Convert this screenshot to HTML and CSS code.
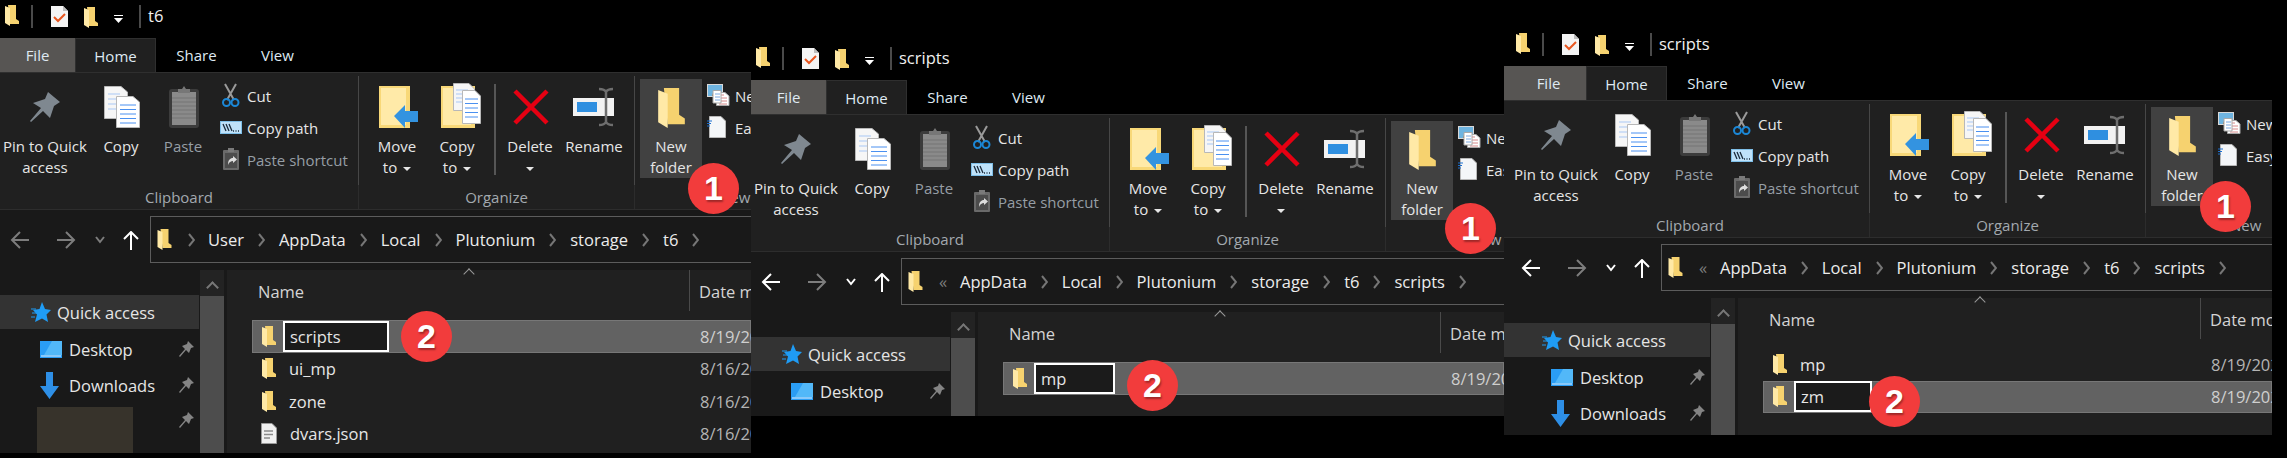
FILE: index.html
```html
<!DOCTYPE html>
<html lang="en">
<head>
    <meta charset="UTF-8">
    <title>Creating the scripts folders</title>
    <link rel="stylesheet" href="styles.css">
</head>
<body>
    <!-- shared icons -->
    <svg class="defs" width="0" height="0">
        <symbol id="i-folder" viewBox="0 0 14 21">
            <path d="M3 0H11V14L14 16V19H5Z" fill="#f6d26f"/>
            <path d="M0 1L5 3V21L0 18Z" fill="#ffe9a6"/>
        </symbol>
        <symbol id="i-check" viewBox="0 0 17 21">
            <path d="M0 0H12L17 5V21H0Z" fill="#f4f4f4"/>
            <path d="M12 0V5H17Z" fill="#bdbdbd"/>
            <path d="M3 11L7 15L14 8" fill="none" stroke="#e8561f" stroke-width="2"/>
        </symbol>
        <symbol id="i-qat" viewBox="0 0 9 8">
            <path d="M0 0.5H9" stroke="#fff" stroke-width="1"/>
            <path d="M0 3H9L4.5 8Z" fill="#fff"/>
        </symbol>
        <symbol id="i-crumb" viewBox="0 0 7 14">
            <path d="M1 1L6 7L1 13" fill="none" stroke="#767676" stroke-width="2"/>
        </symbol>
        <symbol id="i-arrow" viewBox="0 0 20 20">
            <path d="M19 10H2M10 2L2 10L10 18" fill="none" stroke="currentColor" stroke-width="2"/>
        </symbol>
        <symbol id="i-chev" viewBox="0 0 10 8">
            <path d="M1 1L5 6L9 1" fill="none" stroke="currentColor" stroke-width="2"/>
        </symbol>
        <symbol id="i-up" viewBox="0 0 16 19">
            <path d="M8 19V2M1 8L8 1L15 8" fill="none" stroke="#fff" stroke-width="2"/>
        </symbol>
        <symbol id="i-star" viewBox="0 0 20 20">
            <path d="M11 0L14 7L20 8L15.500 12.500L17 20L11 16.500L4 20L6 12.500L2 8L8.500 7Z" fill="#1f9cf5"/>
            <path d="M0 7H5M1 11H6M0 15H4" stroke="#1f9cf5"/>
        </symbol>
        <symbol id="i-desktop" viewBox="0 0 22 17">
            <rect width="22" height="17" fill="#2a9df4"/>
            <path d="M12 0H22V14L4 14Z" fill="#52b8f8"/>
            <path d="M1 15H21" stroke="#e8f4ff"/>
        </symbol>
        <symbol id="i-down" viewBox="0 0 19 27">
            <path d="M6 0H13V14H19L9.500 27L0 14H6Z" fill="#2e8fe6"/>
        </symbol>
        <symbol id="i-pin" viewBox="0 0 15 16">
            <path d="M9 0L15 6L12 7L10 12L7 9L1 16L0 15L6 8L3 5L8 3Z" fill="#848484"/>
        </symbol>
        <symbol id="i-file" viewBox="0 0 16 21">
            <path d="M0.500 0.500H11L15.500 5V20.500H0.500Z" fill="#f0f0f0" stroke="#9a9a9a"/>
            <path d="M3 8H12M3 11.500H12M3 15H9" stroke="#8a8a8a" stroke-width="1.500"/>
        </symbol>
        <!-- ribbon icons, drawn in window coordinates -->
        <symbol id="i-big-pin" viewBox="0 80 90 48">
            <path d="M48 92L60 102L54 106L50 118L43 111L31 122L30 121L41 108L33 103L45 99Z" fill="#7f8890"/>
        </symbol>
        <symbol id="i-big-copy" viewBox="90 80 62 48">
            <path d="M104.500 86.500H121L127.500 92V118.500H104.500Z" fill="#f6f6f6" stroke="#b8b8b8"/>
            <path d="M108 94H120M108 99H123M108 104H123M108 109H123" stroke="#a9c8f5"/>
            <path d="M116.500 96.500H133L139.500 102V127.500H116.500Z" fill="#fff" stroke="#b8b8b8"/>
            <path d="M120 105H136M120 109.500H136M120 114H136M120 118.500H136M120 123H136" stroke="#4a90f0"/>
        </symbol>
        <symbol id="i-big-paste" viewBox="152 80 62 48">
            <rect x="169" y="89" width="30" height="39" rx="3" fill="#3c3c3c"/>
            <rect x="172" y="92" width="24" height="33" fill="#8a8a8a"/>
            <path d="M172 98H196M172 102H196M172 106H196M172 110H196M172 114H196M172 118H196" stroke="#747474"/>
            <path d="M178 93V89H182L184 86L186 89H190V93Z" fill="#777"/>
        </symbol>
        <symbol id="i-cut" viewBox="220 80 27 32">
            <path d="M225 84L234 100M236 84L227 100" stroke="#9a9a9a" stroke-width="2"/>
            <circle cx="226.500" cy="102.500" r="3.500" fill="none" stroke="#1b87d6" stroke-width="2"/>
            <circle cx="235" cy="102.500" r="3.500" fill="none" stroke="#1b87d6" stroke-width="2"/>
        </symbol>
        <symbol id="i-path" viewBox="220 112 27 32">
            <rect x="220.500" y="121.500" width="21" height="12" fill="#bfe2fa" stroke="#7fbfe8"/>
            <path d="M223 124L226 131M226 124L229 131M229 124L232 131" stroke="#1c2c3c" stroke-width="1.300"/>
            <path d="M233 131H240" stroke="#1c2c3c" stroke-dasharray="1 1.500" stroke-width="1.300"/>
        </symbol>
        <symbol id="i-shortcut" viewBox="220 144 27 32">
            <rect x="223" y="150" width="16" height="20" rx="1" fill="#6a6a6a"/>
            <rect x="225" y="153" width="12" height="15" fill="#4c4c4c"/>
            <path d="M228 148H234V152H228Z" fill="#7a7a7a"/>
            <path d="M228 165C228 160 230 158 233 158V156L237 159.500L233 163V161C231 161 229 162 228 165Z" fill="#ddd"/>
        </symbol>
        <symbol id="i-move" viewBox="367 80 60 48">
            <rect x="379" y="86" width="31" height="42" fill="#f8d878"/>
            <rect x="381" y="88" width="25" height="37" fill="#ffeaa8"/>
            <path d="M394 116L405 105V111H418V122H405V128Z" fill="#3393e0"/>
        </symbol>
        <symbol id="i-copyto" viewBox="427 80 60 48">
            <rect x="441" y="86" width="34" height="42" fill="#f8d878"/>
            <rect x="443" y="88" width="28" height="37" fill="#ffeaa8"/>
            <path d="M453.500 83.500H469L474.500 89V110.500H453.500Z" fill="#f6f6f6" stroke="#b8b8b8"/>
            <path d="M456 90H468M456 94H472M456 98H472M456 102H472" stroke="#a9c8f5"/>
            <path d="M462.500 90.500H475L480.500 96V123.500H462.500Z" fill="#fff" stroke="#b8b8b8"/>
            <path d="M465 99H478M465 103.500H478M465 108H478M465 112.500H478M465 117H478" stroke="#4a90f0"/>
        </symbol>
        <symbol id="i-delete" viewBox="495 80 68 48">
            <path d="M514 91L546 123M546 91L514 123" stroke="#e60012" stroke-width="4.500"/>
        </symbol>
        <symbol id="i-rename" viewBox="563 80 60 48">
            <rect x="572" y="98" width="41" height="18" fill="#f2f2f2"/>
            <rect x="576" y="102" width="20" height="10" fill="#2f8fe0"/>
            <path d="M598 89C601 89 604 90 605 92V122C604 124 601 125 598 125M612 89C609 89 606 90 605 92M605 122C606 124 609 125 612 125" fill="none" stroke="#6e6e6e" stroke-width="2.500"/>
        </symbol>
        <symbol id="i-newitem" viewBox="707 80 28 32">
            <rect x="707.500" y="84.500" width="15" height="12" fill="#6eb4e0" stroke="#d8d8d8"/>
            <path d="M712 96L714 90H717L719 96Z" fill="#a07040"/>
            <path d="M716.500 92.500H725L729 96V105.500H716.500Z" fill="#fff" stroke="#a8a8a8"/>
            <path d="M719 95H724M719 98H727M719 101H727M719 104H727" stroke="#d88a8a"/>
            <path d="M713 90.500H721V103H713Z" fill="#fff" stroke="#a8a8a8"/>
            <path d="M715 94H720M715 97H720M715 100H720" stroke="#7aa8e0"/>
        </symbol>
        <symbol id="i-easy" viewBox="707 112 28 32">
            <path d="M709.500 116.500H721L725.500 121V137.500H709.500Z" fill="#f4f6f8" stroke="#b8b8b8"/>
            <path d="M706 121H712M706 123.500H711M706 126H710" stroke="#1b6fd0"/>
        </symbol>
    </svg>

    <!-- first window: t6 -->
    <section class="win win-a">
        <header class="titlebar">
            <svg class="qat-folder"><use href="#i-folder"/></svg>
            <span class="qat-sep"></span>
            <svg class="qat-check"><use href="#i-check"/></svg>
            <svg class="qat-folder2"><use href="#i-folder"/></svg>
            <svg class="qat-drop"><use href="#i-qat"/></svg>
            <span class="qat-sep qat-sep-last"></span>
            <span class="title">t6</span>
        </header>
        <nav class="tabs">
            <span class="tab tab-file">File</span>
            <span class="tab tab-home">Home</span>
            <span class="tab tab-share">Share</span>
            <span class="tab tab-view">View</span>
        </nav>
        <div class="ribbon">
            <div class="group group-clipboard">
                <div class="group-items">
                    <div class="big big-pin"><svg><use href="#i-big-pin"/></svg><span>Pin to Quick</span><span>access</span></div>
                    <div class="big big-copy"><svg><use href="#i-big-copy"/></svg><span>Copy</span></div>
                    <div class="big big-paste dim"><svg><use href="#i-big-paste"/></svg><span>Paste</span></div>
                    <div class="smalls smalls-clip">
                        <div class="small"><svg><use href="#i-cut"/></svg><span>Cut</span></div>
                        <div class="small"><svg><use href="#i-path"/></svg><span>Copy path</span></div>
                        <div class="small dim"><svg><use href="#i-shortcut"/></svg><span>Paste shortcut</span></div>
                    </div>
                </div>
                <div class="group-label">Clipboard</div>
            </div>
            <div class="group group-organize">
                <div class="group-items">
                    <div class="big big-move"><svg><use href="#i-move"/></svg><span>Move</span><span>to<i class="caret"></i></span></div>
                    <div class="big big-copyto"><svg><use href="#i-copyto"/></svg><span>Copy</span><span>to<i class="caret"></i></span></div>
                    <span class="org-sep"></span>
                    <div class="big big-delete"><svg><use href="#i-delete"/></svg><span>Delete</span><span><i class="caret caret-solo"></i></span></div>
                    <div class="big big-rename"><svg><use href="#i-rename"/></svg><span>Rename</span></div>
                </div>
                <div class="group-label">Organize</div>
            </div>
            <div class="group group-new">
                <div class="group-items">
                    <div class="big big-newfolder"><svg><use href="#i-folder"/></svg><span>New</span><span>folder</span></div>
                    <div class="smalls smalls-new">
                        <div class="small"><svg><use href="#i-newitem"/></svg><span>New item</span></div>
                        <div class="small"><svg><use href="#i-easy"/></svg><span>Easy access</span></div>
                    </div>
                </div>
                <div class="group-label group-label-new">New</div>
            </div>
        </div>
        <div class="addr">
            <svg class="nav-back off"><use href="#i-arrow"/></svg>
            <svg class="nav-fwd off"><use href="#i-arrow"/></svg>
            <svg class="nav-chev off"><use href="#i-chev"/></svg>
            <svg class="nav-up"><use href="#i-up"/></svg>
            <div class="addr-box">
                <svg class="addr-folder"><use href="#i-folder"/></svg>
                <svg class="crumb-sep"><use href="#i-crumb"/></svg><span>User</span>
                <svg class="crumb-sep"><use href="#i-crumb"/></svg><span>AppData</span>
                <svg class="crumb-sep"><use href="#i-crumb"/></svg><span>Local</span>
                <svg class="crumb-sep"><use href="#i-crumb"/></svg><span>Plutonium</span>
                <svg class="crumb-sep"><use href="#i-crumb"/></svg><span>storage</span>
                <svg class="crumb-sep"><use href="#i-crumb"/></svg><span>t6</span>
                <svg class="crumb-sep"><use href="#i-crumb"/></svg>
            </div>
        </div>
        <div class="panes">
            <aside class="tree">
                <div class="tree-rows">
                    <div class="tree-row tree-quick"><svg class="ic-star"><use href="#i-star"/></svg>Quick access</div>
                    <div class="tree-row"><svg class="ic-desktop"><use href="#i-desktop"/></svg>Desktop<svg class="ic-pin"><use href="#i-pin"/></svg></div>
                    <div class="tree-row"><svg class="ic-down"><use href="#i-down"/></svg>Downloads<svg class="ic-pin"><use href="#i-pin"/></svg></div>
                    <div class="tree-row tree-thumb"><span class="thumb"></span><svg class="ic-pin"><use href="#i-pin"/></svg></div>
                </div>
                <div class="tree-scroll"><span class="scroll-up"></span><span class="scroll-thumb"></span></div>
            </aside>
            <main class="list">
                <div class="list-head"><span class="col-name">Name<i class="sort"></i></span><span class="col-date">Date modified</span></div>
                <div class="row row-on"><svg class="ic-item"><use href="#i-folder"/></svg><span class="name name-edit edit-scripts">scripts</span><span class="date">8/19/2020</span></div>
                <div class="row"><svg class="ic-item"><use href="#i-folder"/></svg><span class="name">ui_mp</span><span class="date">8/16/2020</span></div>
                <div class="row"><svg class="ic-item"><use href="#i-folder"/></svg><span class="name">zone</span><span class="date">8/16/2020</span></div>
                <div class="row"><svg class="ic-item ic-json"><use href="#i-file"/></svg><span class="name">dvars.json</span><span class="date">8/16/2020</span></div>
            </main>
        </div>
        <span class="badge badge-one">1</span>
        <span class="badge badge-two">2</span>
    </section>

    <!-- second window: t6\scripts -->
    <section class="win win-b">
        <header class="titlebar">
            <svg class="qat-folder"><use href="#i-folder"/></svg>
            <span class="qat-sep"></span>
            <svg class="qat-check"><use href="#i-check"/></svg>
            <svg class="qat-folder2"><use href="#i-folder"/></svg>
            <svg class="qat-drop"><use href="#i-qat"/></svg>
            <span class="qat-sep qat-sep-last"></span>
            <span class="title">scripts</span>
        </header>
        <nav class="tabs">
            <span class="tab tab-file">File</span>
            <span class="tab tab-home">Home</span>
            <span class="tab tab-share">Share</span>
            <span class="tab tab-view">View</span>
        </nav>
        <div class="ribbon">
            <div class="group group-clipboard">
                <div class="group-items">
                    <div class="big big-pin"><svg><use href="#i-big-pin"/></svg><span>Pin to Quick</span><span>access</span></div>
                    <div class="big big-copy"><svg><use href="#i-big-copy"/></svg><span>Copy</span></div>
                    <div class="big big-paste dim"><svg><use href="#i-big-paste"/></svg><span>Paste</span></div>
                    <div class="smalls smalls-clip">
                        <div class="small"><svg><use href="#i-cut"/></svg><span>Cut</span></div>
                        <div class="small"><svg><use href="#i-path"/></svg><span>Copy path</span></div>
                        <div class="small dim"><svg><use href="#i-shortcut"/></svg><span>Paste shortcut</span></div>
                    </div>
                </div>
                <div class="group-label">Clipboard</div>
            </div>
            <div class="group group-organize">
                <div class="group-items">
                    <div class="big big-move"><svg><use href="#i-move"/></svg><span>Move</span><span>to<i class="caret"></i></span></div>
                    <div class="big big-copyto"><svg><use href="#i-copyto"/></svg><span>Copy</span><span>to<i class="caret"></i></span></div>
                    <span class="org-sep"></span>
                    <div class="big big-delete"><svg><use href="#i-delete"/></svg><span>Delete</span><span><i class="caret caret-solo"></i></span></div>
                    <div class="big big-rename"><svg><use href="#i-rename"/></svg><span>Rename</span></div>
                </div>
                <div class="group-label">Organize</div>
            </div>
            <div class="group group-new">
                <div class="group-items">
                    <div class="big big-newfolder"><svg><use href="#i-folder"/></svg><span>New</span><span>folder</span></div>
                    <div class="smalls smalls-new">
                        <div class="small"><svg><use href="#i-newitem"/></svg><span>New item</span></div>
                        <div class="small"><svg><use href="#i-easy"/></svg><span>Easy access</span></div>
                    </div>
                </div>
                <div class="group-label group-label-new">New</div>
            </div>
        </div>
        <div class="addr">
            <svg class="nav-back"><use href="#i-arrow"/></svg>
            <svg class="nav-fwd off"><use href="#i-arrow"/></svg>
            <svg class="nav-chev"><use href="#i-chev"/></svg>
            <svg class="nav-up"><use href="#i-up"/></svg>
            <div class="addr-box addr-box-deep">
                <svg class="addr-folder"><use href="#i-folder"/></svg>
                <span class="crumb-more">«</span><span>AppData</span>
                <svg class="crumb-sep"><use href="#i-crumb"/></svg><span>Local</span>
                <svg class="crumb-sep"><use href="#i-crumb"/></svg><span>Plutonium</span>
                <svg class="crumb-sep"><use href="#i-crumb"/></svg><span>storage</span>
                <svg class="crumb-sep"><use href="#i-crumb"/></svg><span>t6</span>
                <svg class="crumb-sep"><use href="#i-crumb"/></svg><span>scripts</span>
                <svg class="crumb-sep"><use href="#i-crumb"/></svg>
            </div>
        </div>
        <div class="panes">
            <aside class="tree">
                <div class="tree-rows">
                    <div class="tree-row tree-quick"><svg class="ic-star"><use href="#i-star"/></svg>Quick access</div>
                    <div class="tree-row"><svg class="ic-desktop"><use href="#i-desktop"/></svg>Desktop<svg class="ic-pin"><use href="#i-pin"/></svg></div>
                </div>
                <div class="tree-scroll"><span class="scroll-up"></span><span class="scroll-thumb"></span></div>
            </aside>
            <main class="list">
                <div class="list-head"><span class="col-name">Name<i class="sort"></i></span><span class="col-date">Date modified</span></div>
                <div class="row row-on"><svg class="ic-item"><use href="#i-folder"/></svg><span class="name name-edit edit-mp">mp</span><span class="date">8/19/2020</span></div>
            </main>
        </div>
        <span class="badge badge-one">1</span>
        <span class="badge badge-two">2</span>
    </section>

    <!-- third window: t6\scripts with mp already there -->
    <section class="win win-c">
        <header class="titlebar">
            <svg class="qat-folder"><use href="#i-folder"/></svg>
            <span class="qat-sep"></span>
            <svg class="qat-check"><use href="#i-check"/></svg>
            <svg class="qat-folder2"><use href="#i-folder"/></svg>
            <svg class="qat-drop"><use href="#i-qat"/></svg>
            <span class="qat-sep qat-sep-last"></span>
            <span class="title">scripts</span>
        </header>
        <nav class="tabs">
            <span class="tab tab-file">File</span>
            <span class="tab tab-home">Home</span>
            <span class="tab tab-share">Share</span>
            <span class="tab tab-view">View</span>
        </nav>
        <div class="ribbon">
            <div class="group group-clipboard">
                <div class="group-items">
                    <div class="big big-pin"><svg><use href="#i-big-pin"/></svg><span>Pin to Quick</span><span>access</span></div>
                    <div class="big big-copy"><svg><use href="#i-big-copy"/></svg><span>Copy</span></div>
                    <div class="big big-paste dim"><svg><use href="#i-big-paste"/></svg><span>Paste</span></div>
                    <div class="smalls smalls-clip">
                        <div class="small"><svg><use href="#i-cut"/></svg><span>Cut</span></div>
                        <div class="small"><svg><use href="#i-path"/></svg><span>Copy path</span></div>
                        <div class="small dim"><svg><use href="#i-shortcut"/></svg><span>Paste shortcut</span></div>
                    </div>
                </div>
                <div class="group-label">Clipboard</div>
            </div>
            <div class="group group-organize">
                <div class="group-items">
                    <div class="big big-move"><svg><use href="#i-move"/></svg><span>Move</span><span>to<i class="caret"></i></span></div>
                    <div class="big big-copyto"><svg><use href="#i-copyto"/></svg><span>Copy</span><span>to<i class="caret"></i></span></div>
                    <span class="org-sep"></span>
                    <div class="big big-delete"><svg><use href="#i-delete"/></svg><span>Delete</span><span><i class="caret caret-solo"></i></span></div>
                    <div class="big big-rename"><svg><use href="#i-rename"/></svg><span>Rename</span></div>
                </div>
                <div class="group-label">Organize</div>
            </div>
            <div class="group group-new">
                <div class="group-items">
                    <div class="big big-newfolder"><svg><use href="#i-folder"/></svg><span>New</span><span>folder</span></div>
                    <div class="smalls smalls-new">
                        <div class="small"><svg><use href="#i-newitem"/></svg><span>New item</span></div>
                        <div class="small"><svg><use href="#i-easy"/></svg><span>Easy access</span></div>
                    </div>
                </div>
                <div class="group-label group-label-new">New</div>
            </div>
        </div>
        <div class="addr">
            <svg class="nav-back"><use href="#i-arrow"/></svg>
            <svg class="nav-fwd off"><use href="#i-arrow"/></svg>
            <svg class="nav-chev"><use href="#i-chev"/></svg>
            <svg class="nav-up"><use href="#i-up"/></svg>
            <div class="addr-box addr-box-deep">
                <svg class="addr-folder"><use href="#i-folder"/></svg>
                <span class="crumb-more">«</span><span>AppData</span>
                <svg class="crumb-sep"><use href="#i-crumb"/></svg><span>Local</span>
                <svg class="crumb-sep"><use href="#i-crumb"/></svg><span>Plutonium</span>
                <svg class="crumb-sep"><use href="#i-crumb"/></svg><span>storage</span>
                <svg class="crumb-sep"><use href="#i-crumb"/></svg><span>t6</span>
                <svg class="crumb-sep"><use href="#i-crumb"/></svg><span>scripts</span>
                <svg class="crumb-sep"><use href="#i-crumb"/></svg>
            </div>
        </div>
        <div class="panes">
            <aside class="tree">
                <div class="tree-rows">
                    <div class="tree-row tree-quick"><svg class="ic-star"><use href="#i-star"/></svg>Quick access</div>
                    <div class="tree-row"><svg class="ic-desktop"><use href="#i-desktop"/></svg>Desktop<svg class="ic-pin"><use href="#i-pin"/></svg></div>
                    <div class="tree-row"><svg class="ic-down"><use href="#i-down"/></svg>Downloads<svg class="ic-pin"><use href="#i-pin"/></svg></div>
                </div>
                <div class="tree-scroll"><span class="scroll-up"></span><span class="scroll-thumb"></span></div>
            </aside>
            <main class="list">
                <div class="list-head"><span class="col-name">Name<i class="sort"></i></span><span class="col-date">Date modified</span></div>
                <div class="row"><svg class="ic-item"><use href="#i-folder"/></svg><span class="name">mp</span><span class="date">8/19/2020</span></div>
                <div class="row row-on"><svg class="ic-item"><use href="#i-folder"/></svg><span class="name name-edit edit-zm">zm</span><span class="date">8/19/2020</span></div>
            </main>
        </div>
        <span class="badge badge-one">1</span>
        <span class="badge badge-two">2</span>
    </section>
</body>
</html>
```

FILE: styles.css
```css
* {
    box-sizing: border-box;
}
html, body {
    margin: 0;
    height: 100%;
    background-color: #000;
    overflow: hidden;
}
body {
    position: relative;
    font-family: "Open Sans", "Noto Sans", sans-serif;
    font-size: 15px;
    color: #e6e6e6;
}
svg {
    display: block;
    flex: none;
}
.defs {
    position: absolute;
}

/* the three screenshots sit on a black canvas */
.win {
    --inset: 0px;
    position: absolute;
    display: flex;
    flex-direction: column;
    overflow: hidden;
    background-color: #000;
}
.win-a { left: 0; top: 0; width: 751px; height: 453px; }
.win-b { left: 751px; top: 42px; width: 753px; height: 374px; }
.win-c { left: 1504px; top: 28px; width: 768px; height: 407px; --inset: 7px; }

/* title bar */
.titlebar {
    display: flex;
    align-items: flex-start;
    height: 38px;
    flex: none;
    padding-left: calc(var(--inset) + 5px);
    background-color: #000;
}
.qat-folder { width: 14px; height: 21px; margin-top: 5px; }
.qat-sep { width: 2px; height: 23px; margin: 5px 0 0 12px; background-color: #4a4a4a; }
.qat-check { width: 17px; height: 21px; margin: 6px 0 0 18px; }
.qat-folder2 { width: 14px; height: 21px; margin: 7px 0 0 16px; }
.qat-drop { width: 9px; height: 8px; margin: 15px 0 0 16px; }
.qat-sep-last { margin-left: 16px; }
.title { margin-left: 7px; font-size: 16.500px; line-height: 32px; color: #f0f0f0; }

/* tabs */
.tabs {
    display: flex;
    height: 34px;
    flex: none;
    line-height: 34px;
    color: #dfe9f2;
}
.tab { text-align: center; }
.tab-file { width: calc(var(--inset) + 75px); padding-left: var(--inset); background-color: #575553; }
.tab-home { width: 81px; background-color: #202020; border: 1px solid #2f2f2f; border-bottom: none; }
.tab-share { width: 81px; }
.tab-view { width: 81px; }

/* ribbon */
.ribbon {
    display: flex;
    height: 138px;
    flex: none;
    padding-left: var(--inset);
    background-color: #202020;
    border-top: 1px solid #2f2f2f;
    border-bottom: 1px solid #2d2d2d;
}
.group {
    display: flex;
    flex-direction: column;
    flex: none;
}
.group-clipboard { width: 359px; }
.group-organize { width: 276px; }
.group-new { flex: 1; overflow: hidden; }
.group-items {
    display: flex;
    height: 111px;
    margin-top: 3px;
    border-right: 1px solid #474747;
}
.group-new .group-items { border-right: none; }
.group-label {
    flex: 1;
    text-align: center;
    line-height: 24px;
    color: #a3a9af;
    border-right: 1px solid #2c2c2c;
}
.group-label-new { padding: 0 0 0 68px; text-align: left; margin-left: 16px; border-right: none; }

.big {
    display: flex;
    flex-direction: column;
    align-items: center;
    flex: none;
    line-height: 21px;
    white-space: nowrap;
    padding-top: 4px;
}
.big svg { height: 48px; margin-bottom: 8px; }
.big-pin { width: 90px; }
.big-pin svg { width: 90px; }
.big-copy { width: 62px; }
.big-copy svg { width: 62px; }
.big-paste { width: 62px; }
.big-paste svg { width: 62px; }
.big-move { width: 60px; margin-left: 8px; }
.big-move svg { width: 60px; }
.big-copyto { width: 60px; }
.big-copyto svg { width: 60px; }
.big-delete { width: 68px; }
.big-delete svg { width: 68px; }
.big-rename { width: 60px; }
.big-rename svg { width: 60px; }
.big-newfolder {
    width: 62px;
    height: 99px;
    margin: 3px 0 0 5px;
    padding-top: 0;
    background-color: #414141;
}
.big-newfolder svg { width: 27px; height: 40px; margin: 9px 0 8px; }
.org-sep {
    width: 2px;
    height: 91px;
    margin: 8px 0 0 7px;
    background-color: #565656;
}
.dim { color: #969ea5; }

.smalls {
    display: flex;
    flex-direction: column;
    padding-top: 4px;
    flex: none;
}
.smalls-clip { margin-left: 6px; }
.smalls-new { margin-left: 5px; }
.small {
    display: flex;
    align-items: center;
    height: 32px;
    white-space: nowrap;
}
.small svg { width: 27px; height: 32px; }
.smalls-new .small svg { width: 28px; }

.caret {
    display: inline-block;
    width: 0;
    height: 0;
    margin-left: 6px;
    vertical-align: middle;
    border-left: 4px solid transparent;
    border-right: 4px solid transparent;
    border-top: 4px solid #e6e6e6;
}
.caret-solo { margin-left: 0; }

/* address row */
.addr {
    display: flex;
    align-items: center;
    height: 60px;
    flex: none;
    padding-left: calc(var(--inset) + 10px);
    background-color: #191919;
}
.nav-back { width: 20px; height: 20px; color: #fff; }
.nav-fwd { width: 20px; height: 20px; margin-left: 26px; color: #7d7d7d; transform: scaleX(-1); }
.nav-chev { width: 10px; height: 8px; margin-left: 19px; color: #fff; }
.nav-chev.off { color: #7d7d7d; }
.nav-back.off { color: #7d7d7d; }
.nav-up { width: 16px; height: 19px; margin-left: 18px; }
.addr-box {
    display: flex;
    align-items: center;
    align-self: flex-start;
    flex: 1;
    height: 47px;
    margin: 6px -2px 0 11px;
    padding-left: 6px;
    border: 1px solid #5c5c5c;
    font-size: 16.500px;
    white-space: nowrap;
    color: #ececec;
}
.addr-folder { width: 15px; height: 21px; margin-right: 16px; }
.crumb-sep { width: 7px; height: 14px; margin: 0 14px; }
.addr-folder + .crumb-sep { margin-left: 0; margin-right: 13px; }
.crumb-more { width: 21px; color: #7d7d7d; }

/* panes */
.panes {
    display: flex;
    flex: 1;
    min-height: 0;
    font-size: 16.500px;
    background-color: #191919;
}
.tree {
    display: flex;
    flex: none;
    width: calc(var(--inset) + 224px);
    padding-top: 25px;
}
.tree-rows {
    flex: none;
    width: calc(var(--inset) + 199px);
    margin-right: 1px;
}
.tree-row {
    display: flex;
    align-items: center;
    height: 36px;
    padding-left: calc(var(--inset) + 40px);
    white-space: nowrap;
}
.tree-quick {
    height: 34px;
    margin-bottom: 2px;
    padding-left: calc(var(--inset) + 31px);
    background-color: #333;
}
.ic-star { width: 20px; height: 20px; margin-right: 6px; }
.ic-desktop { width: 22px; height: 17px; margin-right: 7px; }
.ic-down { width: 19px; height: 27px; margin-right: 10px; }
.ic-pin { width: 15px; height: 16px; margin-left: auto; margin-right: 5px; }
.tree-thumb { height: 46px; margin-top: 4px; align-items: flex-start; padding-left: calc(var(--inset) + 37px); }
.tree-thumb .ic-pin { margin-top: 5px; }
.thumb { width: 96px; height: 46px; background-color: #37332b; }
.tree-scroll {
    display: flex;
    flex-direction: column;
    align-items: stretch;
    width: 24px;
    margin-top: -25px;
    background-color: #232323;
}
.scroll-up {
    display: block;
    width: 9px;
    height: 9px;
    margin: 13px auto 0;
    border-left: 2px solid #777;
    border-top: 2px solid #777;
    transform: rotate(45deg);
}
.scroll-thumb { flex: 1; margin-top: 4px; background-color: #4d4d4d; }

.list {
    flex: 1;
    min-width: 0;
    margin-left: 3px;
    background-color: #202020;
}
.list-head {
    display: flex;
    height: 50px;
    color: #d4d4d4;
}
.col-name {
    position: relative;
    flex: none;
    width: 463px;
    height: 41px;
    padding: 10px 0 0 31px;
    border-right: 1px solid #4a4a4a;
}
.sort {
    position: absolute;
    left: 238px;
    top: 0;
    width: 8px;
    height: 8px;
    border-left: 1px solid #999;
    border-top: 1px solid #999;
    transform: rotate(45deg);
}
.col-date {
    flex: none;
    padding: 10px 0 0 9px;
    white-space: nowrap;
}
.row {
    display: flex;
    align-items: center;
    height: 32.500px;
    margin-left: 25px;
    white-space: nowrap;
}
.row-on {
    background-color: #626262;
    border: 1px solid #777;
}
.ic-item { width: 14px; height: 21px; margin-left: 10px; }
.ic-json { width: 16px; height: 21px; margin-left: 9px; }
.name {
    flex: none;
    width: 424px;
    padding-left: 13px;
    color: #e6e6e6;
}
.ic-json + .name { width: 423px; }
.row-on .ic-item { margin-left: 9px; }
.row-on .date { color: #cfcfcf; }
.date { flex: none; color: #b4b4b4; }
.name-edit {
    height: 31px;
    padding-left: 5px;
    margin-left: 7px;
    border: 2px solid #fff;
    background-color: #1b1b1b;
    line-height: 27px;
}
/* the edit box is only as wide as the rename allows, the rest pads out the date */
.edit-scripts { width: 106px; margin-right: 311px; }
.edit-mp { width: 81px; margin-right: 336px; }
.edit-zm { width: 78px; margin-right: 339px; }

/* numbered callouts */
.badge {
    position: absolute;
    width: 51px;
    height: 51px;
    border-radius: 50%;
    background-color: #f23c3c;
    color: #fff;
    font-family: "Liberation Sans", sans-serif;
    font-size: 34px;
    font-weight: 700;
    line-height: 51px;
    text-align: center;
    text-shadow: 1px 2px 2px rgba(0, 0, 0, 0.35);
}
.win-a .badge-one { left: 688px; top: 163px; }
.win-a .badge-two { left: 401px; top: 311px; }
.win-b .badge-one { left: 694px; top: 161px; }
.win-b .badge-two { left: 376px; top: 318px; }
.win-c .badge-one { left: 696px; top: 153px; }
.win-c .badge-two { left: 365px; top: 348px; }
```
